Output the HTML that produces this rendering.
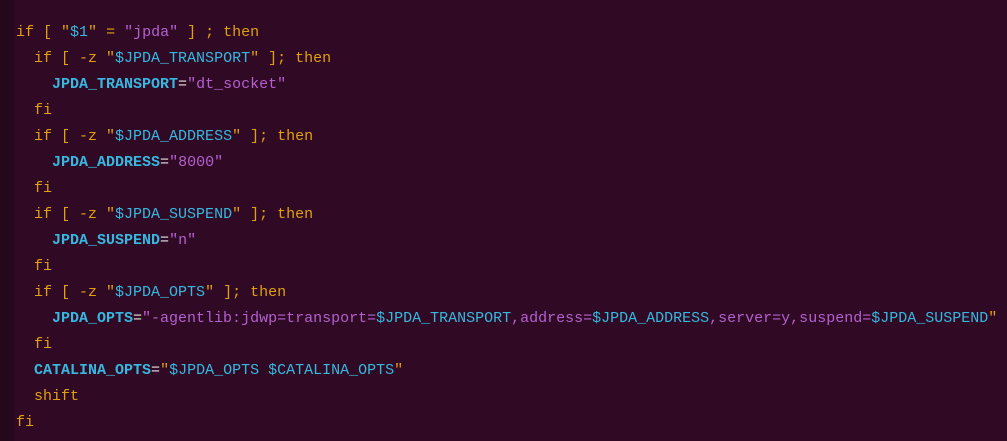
<!DOCTYPE html><html><head><style>
body{margin:0;width:1007px;height:441px;background:#300a24;overflow:hidden;position:relative}
.g{position:absolute;left:0;top:0;width:14px;height:441px;background:#24081c}
pre{position:absolute;left:16px;top:20px;margin:0;font:15px/26px "Liberation Mono","DejaVu Sans Mono",monospace;color:#e8e0e0}
.k{color:#e0a010}.s{color:#b45fd0}.v{color:#36b8e0}.b{color:#36b8e0;font-weight:bold}.q{color:#e0a010}
</style></head><body><div class="g"></div><pre><span class="k">if [ </span><span class="q">"</span><span class="v">$1</span><span class="q">"</span><span class="k"> = </span><span class="s">"jpda"</span><span class="k"> ] ; then</span>
  <span class="k">if [ -z </span><span class="q">"</span><span class="v">$JPDA_TRANSPORT</span><span class="q">"</span><span class="k"> ]; then</span>
    <span class="b">JPDA_TRANSPORT</span>=<span class="s">"dt_socket"</span>
  <span class="k">fi</span>
  <span class="k">if [ -z </span><span class="q">"</span><span class="v">$JPDA_ADDRESS</span><span class="q">"</span><span class="k"> ]; then</span>
    <span class="b">JPDA_ADDRESS</span>=<span class="s">"8000"</span>
  <span class="k">fi</span>
  <span class="k">if [ -z </span><span class="q">"</span><span class="v">$JPDA_SUSPEND</span><span class="q">"</span><span class="k"> ]; then</span>
    <span class="b">JPDA_SUSPEND</span>=<span class="s">"n"</span>
  <span class="k">fi</span>
  <span class="k">if [ -z </span><span class="q">"</span><span class="v">$JPDA_OPTS</span><span class="q">"</span><span class="k"> ]; then</span>
    <span class="b">JPDA_OPTS</span>=<span class="s">"-agentlib:jdwp=transport=</span><span class="v">$JPDA_TRANSPORT</span><span class="s">,address=</span><span class="v">$JPDA_ADDRESS</span><span class="s">,server=y,suspend=</span><span class="v">$JPDA_SUSPEND</span><span class="q">"</span>
  <span class="k">fi</span>
  <span class="b">CATALINA_OPTS</span>=<span class="q">"</span><span class="v">$JPDA_OPTS $CATALINA_OPTS</span><span class="q">"</span>
  <span class="k">shift</span>
<span class="k">fi</span></pre></body></html>
